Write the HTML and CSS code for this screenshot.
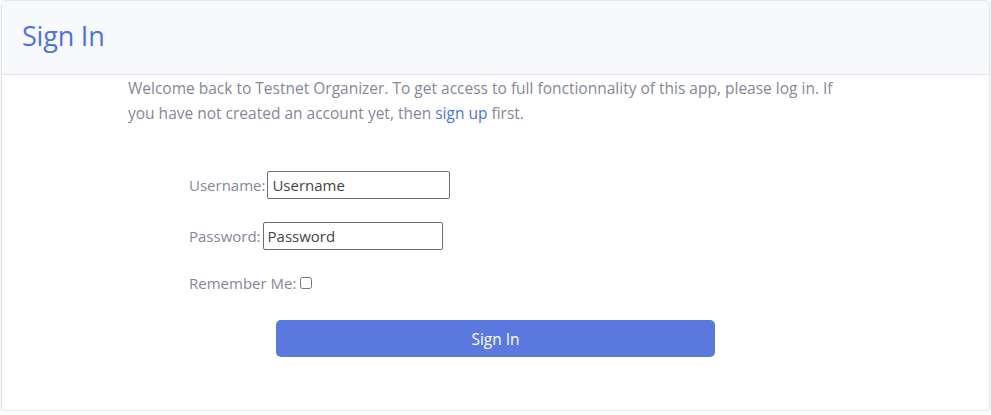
FILE: index.html
```html
<!DOCTYPE html>
<html>
<head>
<meta charset="utf-8">
<link rel="stylesheet" href="styles.css">
</head>
<body>
<div class="card">
  <div class="card-header">
    <h3 class="title">Sign In</h3>
  </div>
  <div class="card-body">
    <p class="intro">Welcome back to Testnet Organizer. To get access to full fonctionnality of this app, please log in. If you have not created an account yet, then <a href="#" class="link">sign up</a> first.</p>
    <form class="form">
      <div class="row">
        <label class="label">Username:</label><input class="input input-user" type="text" placeholder="Username">
      </div>
      <div class="row">
        <label class="label">Password:</label><input class="input input-pass" type="password" placeholder="Password">
      </div>
      <div class="row row-check">
        <label class="label">Remember Me:</label><input class="check" type="checkbox">
      </div>
      <div class="btn-wrap">
        <button type="button" class="btn">Sign In</button>
      </div>
    </form>
  </div>
</div>
</body>
</html>
```
FILE: styles.css
```css
html, body {
  margin: 0;
  padding: 0;
  background: #ffffff;
}
body {
  padding: 0 1px 0 1px;
  font-family: "Open Sans", "Noto Sans", sans-serif;
  color: #858796;
}
.card {
  border: 1px solid #e3e6f0;
  border-radius: 5px;
  box-shadow: 0 2px 4px rgba(58, 59, 69, 0.12);
  height: 411px;
  box-sizing: border-box;
  overflow: hidden;
}
.card-header {
  background: #f8f9fc;
  border-bottom: 1px solid #e3e6f0;
  height: 74px;
  box-sizing: border-box;
  padding: 0 20px 4px 20px;
  display: flex;
  align-items: center;
}
.title {
  margin: 0;
  font-size: 27px;
  font-weight: 400;
  color: #4e73df;
  letter-spacing: -0.2px;
}
.card-body {
  padding: 0;
}
.intro {
  width: 735px;
  margin: 1px auto 0 126px;
  font-size: 15.5px;
  line-height: 25px;
}
.link {
  color: #4e73df;
  text-decoration: none;
}
.form {
  margin-top: 45px;
}
.row {
  display: flex;
  align-items: center;
  padding-left: 187px;
  height: 28px;
  margin-bottom: 23px;
  font-size: 15px;
}
.label {
  margin-right: 2px;
}
.input {
  height: 28px;
  box-sizing: border-box;
  border: 1px solid #6e6e6e;
  border-radius: 2px;
  font-family: "Open Sans", "Noto Sans", sans-serif;
  font-size: 15px;
  padding: 0 4px;
  color: #444;
}
.input::placeholder {
  color: #444;
}
.input-user {
  width: 183px;
}
.input-pass {
  width: 180px;
}
.row-check {
  height: 20px;
  margin-top: 0;
  margin-bottom: 27px;
}
.check {
  width: 12px;
  height: 12px;
  margin: 0 0 0 2px;
}
.btn-wrap {
  display: flex;
  justify-content: center;
}
.btn {
  width: 439px;
  height: 37px;
  background: #5a78de;
  border: none;
  border-radius: 5px;
  color: #ffffff;
  font-family: "Open Sans", "Noto Sans", sans-serif;
  font-size: 15.5px;
}
```
